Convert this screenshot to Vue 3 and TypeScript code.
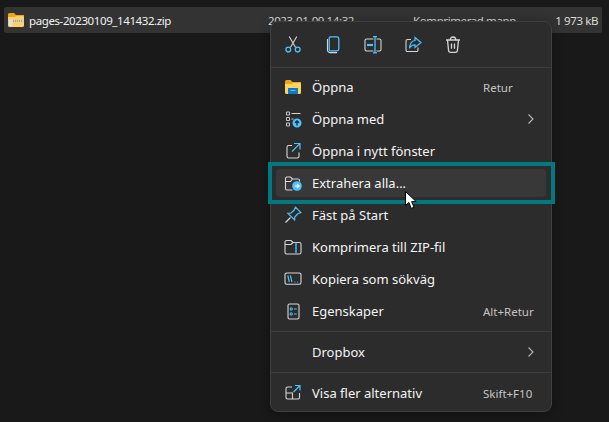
<script setup lang="ts">
interface Shape { d: string; s?: string; f?: string; w?: number }
interface Row { label: string; key?: string; icon?: string; sub?: boolean; hover?: boolean }

const W = '#d6d6d6'
const B = '#4cc2ff'

const icons: Record<string, Shape[]> = {
  cut: [
    { d: 'M5.2 .5 L11.6 11.5 M12.8 .5 L6.4 11.5', s: W },
    { d: 'M6.7 13.6a2.4 2.4 0 1 1-4.8 0a2.4 2.4 0 1 1 4.8 0z M16.1 13.6a2.4 2.4 0 1 1-4.8 0a2.4 2.4 0 1 1 4.8 0z', s: B, w: 1.3 },
  ],
  copy: [
    { d: 'M3.5 3 V14 A2.6 2.6 0 0 0 6.1 16.6 H13', s: W },
    { d: 'M6.2 .9 H13 A1.8 1.8 0 0 1 14.8 2.7 V13 A1.8 1.8 0 0 1 13 14.8 H6.2 A1 1 0 0 1 5.2 13.8 V1.9 A1 1 0 0 1 6.2 .9z', s: B, w: 1.3 },
  ],
  rename: [
    { d: 'M9.5 3 H2.5 A1.5 1.5 0 0 0 1 4.5 V13.5 A1.5 1.5 0 0 0 2.5 15 H9.5 M12.5 3 H15.5 A1.5 1.5 0 0 1 17 4.5 V13.5 A1.5 1.5 0 0 1 15.5 15 H12.5', s: W },
    { d: 'M3 9 H9', s: B, w: 2.2 },
    { d: 'M11 .6 V16.8 M9 .6 H13 M9 16.8 H13', s: B, w: 1.3 },
  ],
  share: [
    { d: 'M7 3.5 H3.5 A1.5 1.5 0 0 0 2 5 V14 A1.5 1.5 0 0 0 3.5 15.5 H12.5 A1.5 1.5 0 0 0 14 14 V11.5', s: W },
    { d: 'M11 1.5 L17 6.5 L11 11.5 V8.8 C8.5 8.8 6.8 9.8 5.5 12.3 C5.8 8.3 7.8 4.8 11 4.5z', s: B, w: 1.2 },
  ],
  trash: [
    { d: 'M2 4 H16 M6.2 4 C6.2 0 11.8 0 11.8 4 M3.5 4 L4.6 14.6 A2 2 0 0 0 6.6 16.4 H11.4 A2 2 0 0 0 13.4 14.6 L14.5 4 M7.5 7.5 V12.8 M10.5 7.5 V12.8', s: W, w: 1.3 },
  ],
  open: [
    { d: 'M1 3.5 A1.5 1.5 0 0 1 2.5 2 H6.5 L8.5 4 H17 V8 H1z', f: '#e8a71c' },
    { d: 'M1 6 H7 L9 5 H15.5 A1.5 1.5 0 0 1 17 6.5 V14.5 A1.5 1.5 0 0 1 15.5 16 H2.5 A1.5 1.5 0 0 1 1 14.5z', f: '#ffd25f' },
    { d: 'M4 10 H14 V16 H4z', f: '#0f79c9' },
    { d: 'M6.5 12 H11.5 V13 H6.5z', f: '#63c0f5' },
  ],
  openWith: [
    { d: 'M2.5 2 H5.5 V5 H2.5z M2.5 7.5 H5.5 V10.5 H2.5z M2.5 13 H5.5 V16 H2.5z', s: W, w: 0.9 },
    { d: 'M7.5 3.5 H16.5 M7.5 9 H9.5', s: W, w: 1 },
    { d: 'M17.5 13 a4.5 4.5 0 1 1-9 0 a4.5 4.5 0 1 1 9 0z', f: B },
    { d: 'M13 15.5 V11 M11 12.8 L13 10.8 L15 12.8', s: '#16242c', w: 1.3 },
  ],
  newWin: [
    { d: 'M8 3.5 H4.8 A1.8 1.8 0 0 0 3 5.3 V14.2 A1.8 1.8 0 0 0 4.8 16 H13.2 A1.8 1.8 0 0 0 15 14.2 V10.5', s: W },
    { d: 'M8 9.5 L15.8 1.7 M10 1.5 H16 V7.5', s: B, w: 1.2 },
  ],
  extract: [
    { d: 'M8.5 16 H3 A1.5 1.5 0 0 1 1.5 14.5 V4.5 A1.5 1.5 0 0 1 3 3 H6.5 L8.5 5 H14 A1.5 1.5 0 0 1 15.5 6.5 V7.5 M1.5 7.5 H6.5 L8.5 5', s: W },
    { d: 'M17.8 12 a4.8 4.8 0 1 1-9.6 0 a4.8 4.8 0 1 1 9.6 0z', f: B },
    { d: 'M10.7 12 H15 M13.1 10.1 L15.1 12 L13.1 13.9', s: '#fff', w: 1.2 },
  ],
  pin: [
    { d: 'M11.5 1.2 L16.8 6.5 L13.5 8 L10.8 11 L10.6 14 L3.8 7.3 L7 7 L10 4.3z', s: B, w: 1.2 },
    { d: 'M6.5 11.5 L1.5 16.5', s: W, w: 1.2 },
  ],
  zip: [
    { d: 'M2.6 2.5 H7 L9 4.5 H15.4 A1.6 1.6 0 0 1 17 6.1 V14.4 A1.6 1.6 0 0 1 15.4 16 H2.6 A1.6 1.6 0 0 1 1 14.4 V4.1 A1.6 1.6 0 0 1 2.6 2.5z M1 6.5 H7 L9 4.5', s: W },
    { d: 'M12 4.5 V16 M11 7 H13 M11 10 H13 M11 13 H13', s: B, w: 1.1 },
  ],
  path: [
    { d: 'M2.7 3 H15.3 A1.7 1.7 0 0 1 17 4.7 V12.5 A1.7 1.7 0 0 1 15.3 14.2 H2.7 A1.7 1.7 0 0 1 1 12.5 V4.7 A1.7 1.7 0 0 1 2.7 3z', s: W },
    { d: 'M3.8 5.5 L5.3 12 M6.4 5.5 L7.9 12 M10.5 12 H11.4 M13 12 H13.9', s: B, w: 1.2 },
  ],
  props: [
    { d: 'M5.5 2 H13.5 A1.5 1.5 0 0 1 15 3.5 V15.5 A1.5 1.5 0 0 1 13.5 17 H5.5 A1.5 1.5 0 0 1 4 15.5 V3.5 A1.5 1.5 0 0 1 5.5 2z', s: W },
    { d: 'M6.2 6 H8.2 V8 H6.2z M6.2 11 H8.2 V13 H6.2z M10 7 H12.8 M10 12 H12.8', s: B, w: 1 },
  ],
  more: [
    { d: 'M8 3 H3.5 A1.5 1.5 0 0 0 2 4.5 V13.5 A1.5 1.5 0 0 0 3.5 15 H14 A1.5 1.5 0 0 0 15.5 13.5 V9 M2 9 H8.5 V15', s: W },
    { d: 'M9.5 8 L16 1.5 M11 1.5 H16 V6.5', s: B, w: 1.2 },
  ],
}

const tools = ['cut', 'copy', 'rename', 'share', 'trash']

const groupOne: Row[] = [
  { label: 'Öppna', key: 'Retur', icon: 'open' },
  { label: 'Öppna med', icon: 'openWith', sub: true },
  { label: 'Öppna i nytt fönster', icon: 'newWin' },
  { label: 'Extrahera alla...', icon: 'extract', hover: true },
  { label: 'Fäst på Start', icon: 'pin' },
  { label: 'Komprimera till ZIP-fil', icon: 'zip' },
  { label: 'Kopiera som sökväg', icon: 'path' },
  { label: 'Egenskaper', key: 'Alt+Retur', icon: 'props' },
]
const groupTwo: Row[] = [{ label: 'Dropbox', sub: true }]
const groupThree: Row[] = [{ label: 'Visa fler alternativ', key: 'Skift+F10', icon: 'more' }]
const groups = [groupOne, groupTwo, groupThree]
</script>

<template>
  <div class="page">
    <div class="file-row">
      <svg class="file-icon" width="18" height="16" viewBox="0 0 18 16">
        <path d="M1 2.5A1.5 1.5 0 0 1 2.5 1H7L9 3H17V7H1z" fill="#e8a71c" />
        <path d="M1 5H7.5L9.5 4H15.5A1.5 1.5 0 0 1 17 5.5V13.5A1.5 1.5 0 0 1 15.5 15H2.5A1.5 1.5 0 0 1 1 13.5z" fill="#ffd25f" />
        <path d="M1 7.5H17V10.5H1z" fill="#cfcfbe" />
        <path d="M6 8.5H7V9.5H6zM8 8.5H9V9.5H8zM10 8.5H11V9.5H10zM12 8.5H13V9.5H12zM14 8.5H15V9.5H14z" fill="#85857a" />
        <path d="M2 7.5H5.5V14H2z" fill="#e2e2e2" />
      </svg>
      <span class="file-name">pages-20230109_141432.zip</span>
      <span class="file-date">2023-01-09 14:32</span>
      <span class="file-type">Komprimerad mapp</span>
      <span class="file-size">1 973 kB</span>
    </div>

    <div class="menu">
      <div class="toolbar">
        <div v-for="t in tools" :key="t" class="tool">
          <svg width="18" height="18" viewBox="0 0 18 18" fill="none">
            <path v-for="(p, i) in icons[t]" :key="i" :d="p.d" :stroke="p.s" :stroke-width="p.w ?? 1.1" :fill="p.f ?? 'none'" />
          </svg>
        </div>
      </div>
      <template v-for="(group, g) in groups" :key="g">
        <div class="sep"></div>
        <div class="group" :class="{ first: g === 0 }">
          <div v-for="row in group" :key="row.label" class="row" :class="{ hover: row.hover }">
            <svg class="row-icon" width="18" height="18" viewBox="0 0 18 18" fill="none">
              <template v-if="row.icon">
                <path v-for="(p, i) in icons[row.icon]" :key="i" :d="p.d" :stroke="p.s" :stroke-width="p.w ?? 1.1" :fill="p.f ?? 'none'" />
              </template>
            </svg>
            <span class="label">{{ row.label }}</span>
            <span v-if="row.key" class="key">{{ row.key }}</span>
            <svg v-if="row.sub" class="chev" width="8" height="12" viewBox="0 0 8 12" fill="none">
              <path d="M1.5 1.5 L6 6 L1.5 10.5" stroke="#b5b5b5" stroke-width="1.1" />
            </svg>
          </div>
        </div>
      </template>
    </div>

    <div class="highlight"></div>

    <svg class="cursor" width="13" height="19" viewBox="0 0 13 19">
      <path d="M.5 .5V14.5L3.9 11.4L6.2 17.4L9 16.2L6.6 10.6H11.2z" fill="#fff" stroke="#000" stroke-width="1" />
    </svg>
  </div>
</template>

<style scoped>
.page {
  position: relative;
  width: 609px;
  height: 422px;
  overflow: hidden;
  background: #191919;
  padding-top: 7px;
  box-sizing: border-box;
  font-family: "Noto Sans", Roboto, sans-serif;
  color: #fff;
}

.file-row {
  display: flex;
  align-items: center;
  height: 26px;
  width: 598px;
  margin-left: 4px;
  background: #333333;
  border-radius: 2px;
  font-size: 11.5px;
  letter-spacing: -0.4px;
}

.file-icon {
  margin-left: 3px;
  flex: none;
}

.file-name {
  margin-left: 4px;
  width: 239px;
  flex: none;
  color: #f2f2f2;
}

.file-date {
  width: 145px;
  flex: none;
  color: #dcdcdc;
}

.file-type {
  width: 115px;
  flex: none;
  color: #dcdcdc;
}

.file-size {
  margin-left: auto;
  margin-right: 4px;
  color: #dcdcdc;
}

.menu {
  position: absolute;
  left: 270px;
  top: 21px;
  width: 282px;
  height: 391px;
  box-sizing: border-box;
  background: #2c2c2c;
  border: 1px solid #404040;
  border-radius: 8px;
  box-shadow: 0 2px 12px rgba(0, 0, 0, 0.35);
}

.toolbar {
  display: flex;
  height: 45px;
  padding-left: 2px;
}

.tool {
  width: 40px;
  display: flex;
  align-items: center;
  justify-content: center;
}

.sep {
  height: 1px;
  background: #3e3e3e;
}

.group {
  display: flex;
  flex-direction: column;
  gap: 4px;
  padding: 6px 0;
}

.group.first {
  padding-top: 5px;
}

.row {
  display: flex;
  align-items: center;
  height: 28px;
  margin: 0 5px;
  padding: 0 11px 0 8px;
  border-radius: 4px;
  font-size: 13px;
  color: #f4f4f4;
}

.row.hover {
  background: #383838;
}

.row-icon {
  flex: none;
  margin-right: 10px;
}

.label {
  flex: 1;
  white-space: nowrap;
}

.key {
  width: 52px;
  flex: none;
  font-size: 11.5px;
  color: #c4c4c4;
  white-space: nowrap;
}

.chev {
  flex: none;
}

.highlight {
  position: absolute;
  left: 268px;
  top: 162px;
  width: 287px;
  height: 42px;
  box-sizing: border-box;
  border: 4px solid #007a80;
}

.cursor {
  position: absolute;
  left: 405px;
  top: 191px;
}
</style>
